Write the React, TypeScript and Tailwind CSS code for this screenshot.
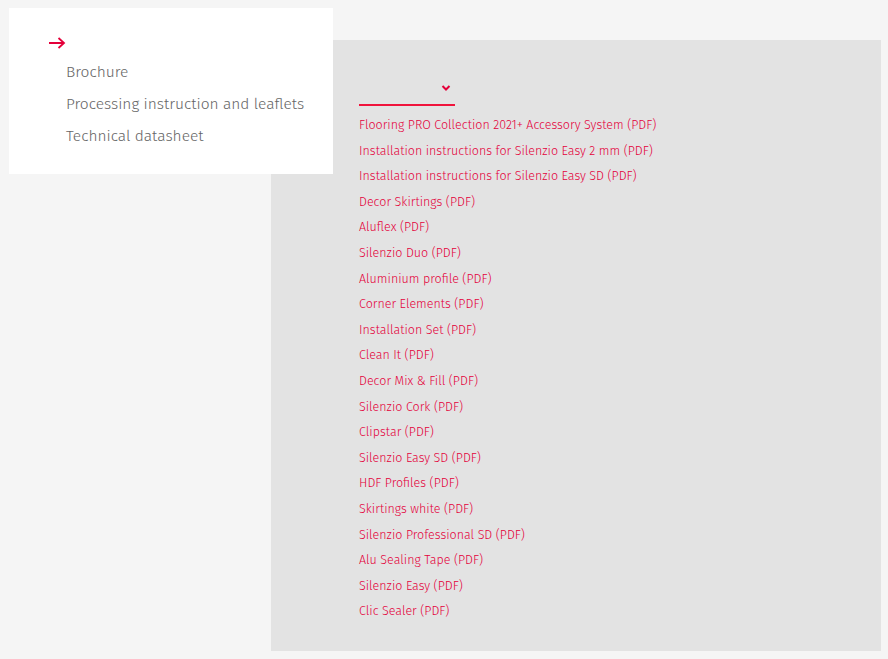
import React from "react";

const links = [
  "Flooring PRO Collection 2021+ Accessory System (PDF)",
  "Installation instructions for Silenzio Easy 2 mm (PDF)",
  "Installation instructions for Silenzio Easy SD (PDF)",
  "Decor Skirtings (PDF)",
  "Aluflex (PDF)",
  "Silenzio Duo (PDF)",
  "Aluminium profile (PDF)",
  "Corner Elements (PDF)",
  "Installation Set (PDF)",
  "Clean It (PDF)",
  "Decor Mix & Fill (PDF)",
  "Silenzio Cork (PDF)",
  "Clipstar (PDF)",
  "Silenzio Easy SD (PDF)",
  "HDF Profiles (PDF)",
  "Skirtings white (PDF)",
  "Silenzio Professional SD (PDF)",
  "Alu Sealing Tape (PDF)",
  "Silenzio Easy (PDF)",
  "Clic Sealer (PDF)",
];

export default function App() {
  return (
    <div
      className="relative w-[888px] h-[659px] bg-[#f5f5f5] overflow-hidden font-light"
      style={{ fontFamily: '"Fira Sans", "Noto Sans", "Open Sans", sans-serif' }}
    >
      <div className="pt-[40px] pl-[271px]">
        <div className="w-[610px] h-[611px] bg-[#e3e3e3] pl-[88px] pt-[40px]">
          <div className="relative w-[96px] h-[26px] border-b-2 border-solid border-[#f0143c]">
            <svg
              className="absolute right-[4px] top-[4px]"
              width="10"
              height="8"
              viewBox="0 0 10 8"
            >
              <path d="M1.5 2 L5 5.5 L8.5 2" fill="none" stroke="#e4003a" strokeWidth="2" />
            </svg>
          </div>
          <ul className="mt-[9px] flex flex-col">
            {links.map((l) => (
              <li key={l} className="h-[25.6px] leading-[20px] text-[12.5px] text-[#e4003a]">
                {l}
              </li>
            ))}
          </ul>
        </div>
      </div>
      <div className="absolute left-[9px] top-[8px] w-[324px] h-[166px] bg-white">
        <div className="pl-[39px] pt-[28px]">
          <svg width="18" height="14" viewBox="0 0 18 14">
            <path d="M1 7 H16 M10.5 2 L16 7 L10.5 12" fill="none" stroke="#e4003a" strokeWidth="1.8" />
          </svg>
        </div>
        <ul className="pl-[57px] pt-[12px] flex flex-col text-[15.5px] text-[#666666]">
          <li className="h-[32px] leading-[20px]">Brochure</li>
          <li className="h-[32px] leading-[20px]">Processing instruction and leaflets</li>
          <li className="h-[32px] leading-[20px]">Technical datasheet</li>
        </ul>
      </div>
    </div>
  );
}
